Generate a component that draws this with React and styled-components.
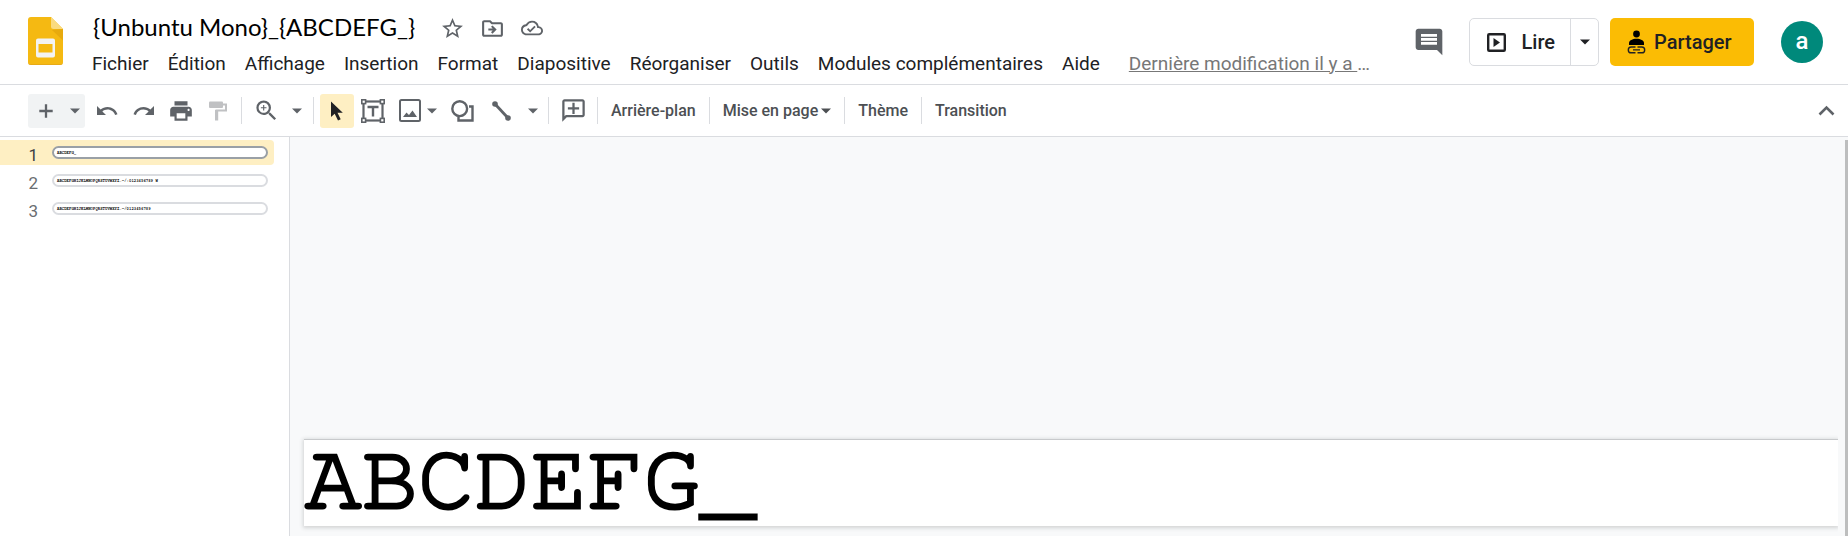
import React from 'react';
import styled, { createGlobalStyle } from 'styled-components';
import {
  MdComment,
  MdOutlineAddComment,
  MdOutlineCloudDone,
  MdOutlineDriveFileMove,
  MdPrint,
  MdRedo,
  MdStarBorder,
  MdUndo,
  MdZoomIn,
} from 'react-icons/md';

const GlobalStyle = createGlobalStyle`
  * { box-sizing: border-box; }
  body {
    margin: 0;
    background: #fff;
    color: #202124;
    font-family: Roboto, "Liberation Sans", sans-serif;
  }
  button, input { font: inherit; color: inherit; }
  svg { display: block; flex: none; }
`;

const Page = styled.div`
  min-height: 100vh;
  display: flex;
  flex-direction: column;
`;

/* ---------- header ---------- */

const Header = styled.header`
  height: 85px;
  display: flex;
  padding: 0 25px 0 28px;
  border-bottom: 1px solid #dadce0;
`;

const HomeLink = styled.a`
  padding-top: 17px;
  margin-right: 20px;
`;

const TitleColumn = styled.div`
  flex: 1;
  min-width: 0;
  padding-top: 10px;
`;

const TitleRow = styled.div`
  display: flex;
  align-items: center;
  height: 36px;
`;

const TitleInput = styled.input`
  width: 338px;
  height: 34px;
  margin-right: 11px;
  padding: 0 0 4px 10px;
  border: 0;
  outline: 0;
  background: none;
  color: #000;
  font-family: Lato, "Liberation Sans", sans-serif;
  font-size: 24px;
`;

const TitleButton = styled.button`
  width: 40px;
  height: 34px;
  display: flex;
  align-items: center;
  justify-content: center;
  padding: 0;
  border: 0;
  background: none;
  color: #5f6368;
`;

const MenuBar = styled.nav`
  display: flex;
  align-items: center;
  gap: 1px;
  height: 34px;
  white-space: nowrap;
`;

const MenuItem = styled.button`
  height: 30px;
  padding: 0 9px;
  border: 0;
  background: none;
  font-size: 19px;
`;

const HistoryLink = styled.a`
  margin-left: 19px;
  color: #777;
  font-size: 19px;
  text-decoration: none;

  span { text-decoration: underline; }
`;

const HeaderActions = styled.div`
  display: flex;
  align-items: center;
  height: 84px;
`;

const CommentsButton = styled.button`
  padding: 0;
  margin-right: 24px;
  border: 0;
  background: none;
  color: #5f6368;
`;

const SplitButton = styled.div`
  display: flex;
  height: 48px;
  margin-right: 11px;
  border: 1px solid #dadce0;
  border-radius: 5px;
`;

const PlayButton = styled.button`
  display: flex;
  align-items: center;
  gap: 16px;
  padding: 0 15px 0 17px;
  border: 0;
  background: none;
  font-size: 20px;
  font-weight: 500;
`;

const PlayMenuButton = styled.button`
  width: 28px;
  display: flex;
  align-items: center;
  justify-content: center;
  padding: 0;
  border: 0;
  border-left: 1px solid #dadce0;
  background: none;
`;

const ShareButton = styled.button`
  display: flex;
  align-items: center;
  gap: 8px;
  width: 144px;
  height: 48px;
  margin-right: 27px;
  padding: 0 0 0 17px;
  border: 0;
  border-radius: 5px;
  background: #fbbc04;
  font-size: 20px;
  font-weight: 500;
`;

const Avatar = styled.button`
  width: 42px;
  height: 42px;
  padding: 0 0 2px;
  border: 0;
  border-radius: 50%;
  background: #00897b;
  color: #fff;
  font-size: 24px;
  font-weight: 500;
  line-height: 38px;
`;

/* ---------- toolbar ---------- */

const Toolbar = styled.div`
  display: flex;
  align-items: center;
  height: 52px;
  padding: 0 3px 0 28px;
  border-bottom: 1px solid #dadce0;
`;

const Tool = styled.button`
  width: ${(p) => p.$width || 37}px;
  height: 34px;
  display: flex;
  align-items: center;
  justify-content: center;
  padding: 0;
  border: 0;
  border-radius: 3px;
  background: ${(p) => (p.$selected ? '#feefc3' : 'transparent')};
  color: ${(p) => (p.$selected ? '#202124' : p.$dimmed ? '#c0c1c3' : '#5f6368')};
`;

const NewSlide = styled.div`
  display: flex;
  margin-right: 3px;
  border-radius: 3px;
  background: #f1f3f4;
`;

const ImageTool = styled(Tool)`
  gap: 6px;
`;

const TextTool = styled.button`
  height: 34px;
  display: flex;
  align-items: center;
  gap: 3px;
  padding: 0 8px 0 7px;
  border: 0;
  background: none;
  color: #4c4f53;
  font-size: 16px;
  font-weight: 500;
  white-space: nowrap;
`;

const Separator = styled.span`
  width: 1px;
  height: 27px;
  margin: 0 6px 0 5px;
  background: #dadce0;
`;

const Spacer = styled.span`
  flex: 1;
`;

/* ---------- workspace ---------- */

const Workspace = styled.main`
  flex: 1;
  display: flex;
`;

const Filmstrip = styled.ol`
  width: 290px;
  flex: none;
  display: flex;
  flex-direction: column;
  gap: 3px;
  margin: 0;
  padding: 3px 15px 0 0;
  border-right: 1px solid #dadce0;
  list-style: none;
`;

const FilmstripRow = styled.li`
  display: flex;
  align-items: center;
  height: 25px;
  padding-right: 6px;
  border-radius: 0 4px 4px 0;
  background: ${(p) => (p.$selected ? '#feefc3' : 'transparent')};
`;

const SlideNumber = styled.span`
  width: 52px;
  padding: 4px 14px 0 0;
  color: ${(p) => (p.$selected ? '#3c4043' : '#6a6d71')};
  font-size: 17px;
  line-height: 20px;
  text-align: right;
`;

const Thumbnail = styled.button`
  flex: 1;
  height: 13px;
  padding: 0 3px;
  border: 2px solid ${(p) => (p.$selected ? '#9aa0a6' : '#dadce0')};
  border-radius: 7px;
  background: #fff;
  color: #000;
  font-family: FreeMono, "Liberation Mono", monospace;
  font-size: 4px;
  font-weight: 700;
  line-height: 8px;
  text-align: left;
  white-space: nowrap;
`;

const Canvas = styled.section`
  flex: 1;
  min-width: 0;
  display: flex;
  align-items: flex-end;
  padding: 0 7px 10px 14px;
  background: #f8f9fa;
`;

const Slide = styled.div`
  flex: 1;
  padding: 0 1px 5px;
  border-top: 1px solid #c8cacc;
  background: #fff;
  box-shadow: 0 1px 4px 1px rgba(60, 64, 67, 0.2);
  clip-path: inset(-8px 0 -8px -8px);
`;

const SlideText = styled.p`
  margin: 0;
  color: #000;
  font-family: FreeMono, "Liberation Mono", monospace;
  font-size: 94px;
  line-height: 81px;
  -webkit-text-stroke: 3px #000;
`;

const ScrollTrack = styled.div`
  width: 3px;
  padding-top: 3px;
  display: flex;
  background: #f8f9fa;
`;

const ScrollThumb = styled.div`
  flex: 1;
  background: #bdbebe;
`;

/* ---------- icons ---------- */

const Caret = () => (
  <svg width="10" height="6" viewBox="0 0 10 6">
    <path d="M0 0.500h10L5 5.500z" fill="currentColor" />
  </svg>
);

const SlidesLogo = () => (
  <svg width="35" height="48" viewBox="0 0 35 48">
    <path d="M3 0h20l12 12v33a3 3 0 0 1-3 3H3a3 3 0 0 1-3-3V3a3 3 0 0 1 3-3z" fill="#f5b912" />
    <path d="M0 44.500V45a3 3 0 0 0 3 3h29a3 3 0 0 0 3-3v-.5a3 3 0 0 1-3 3H3a3 3 0 0 1-3-3z" fill="#d99c1b" />
    <path d="M24 13l11 10.500V12z" fill="#dfa20b" opacity=".65" />
    <path d="M23 0l12 12H25.500A2.500 2.500 0 0 1 23 9.500z" fill="#fadb80" />
    <path
      d="M10 21.500h15a2 2 0 0 1 2 2v15a2 2 0 0 1-2 2H10a2 2 0 0 1-2-2v-15a2 2 0 0 1 2-2zM10.500 27v8.500h14V27z"
      fill="#f3f3f3"
      fillRule="evenodd"
    />
  </svg>
);

const PlayIcon = () => (
  <svg width="19" height="19" viewBox="0 0 19 19">
    <rect x="1.200" y="1.200" width="16.600" height="16.600" rx="1" fill="none" stroke="currentColor" strokeWidth="2.400" />
    <path d="M6.500 5v9l6.500-4.500z" fill="currentColor" />
  </svg>
);

const ShareIcon = () => (
  <svg width="19" height="24" viewBox="0 0 19 24">
    <circle cx="9.500" cy="4" r="3.400" fill="#000" />
    <path d="M2 15v-2c0-2.600 3.500-4.200 7.500-4.200S17 10.400 17 13v2z" fill="#000" />
    <path
      d="M8.500 17H4.200a2.900 2.900 0 0 0 0 5.800h4.300M10.500 17h4.300a2.900 2.900 0 0 1 0 5.800h-4.300M6 19.900h7"
      fill="none"
      stroke="#202124"
      strokeWidth="1.400"
    />
  </svg>
);

const PlusIcon = () => (
  <svg width="14" height="14" viewBox="0 0 14 14">
    <path d="M7 0.300v13.400M0.300 7h13.400" stroke="currentColor" strokeWidth="2.300" />
  </svg>
);

const PaintRollerIcon = () => (
  <svg width="18" height="20" viewBox="0 0 18 20">
    <rect x="0" y="0.500" width="14" height="6.500" rx="1" fill="currentColor" />
    <path d="M14 3.500h3v6H7.500V19" fill="none" stroke="currentColor" strokeWidth="2" />
    <rect x="6" y="9" width="3.200" height="10.500" fill="currentColor" />
  </svg>
);

const PointerIcon = () => (
  <svg width="12" height="20" viewBox="0 0 12 20">
    <path d="M0 0.500v15.500l3.700-3.300 3.300 6.800 2.700-1.300-3.200-6.500H11.800z" fill="currentColor" />
  </svg>
);

const TextBoxIcon = () => (
  <svg width="24" height="24" viewBox="0 0 24 24" fill="none" stroke="currentColor">
    <rect x="2.500" y="2.500" width="19" height="19" strokeWidth="2.200" />
    <path d="M6.500 8h11M12 8v9.500" strokeWidth="2.400" />
    <g fill="#fff" strokeWidth="1.600">
      <rect x="0.800" y="0.800" width="3.800" height="3.800" />
      <rect x="19.400" y="0.800" width="3.800" height="3.800" />
      <rect x="0.800" y="19.400" width="3.800" height="3.800" />
      <rect x="19.400" y="19.400" width="3.800" height="3.800" />
    </g>
  </svg>
);

const ImageIcon = () => (
  <svg width="22" height="23" viewBox="0 0 22 23">
    <rect x="1" y="1" width="20" height="21" rx="1.500" fill="none" stroke="currentColor" strokeWidth="2" />
    <path d="M4 18l3.500-4.500 2.500 2.500 3.500-4.500L18 18z" fill="currentColor" />
  </svg>
);

const ShapeIcon = () => (
  <svg width="23" height="22" viewBox="0 0 23 22" fill="none" stroke="currentColor" strokeWidth="2.400">
    <circle cx="8.700" cy="8.700" r="7.400" />
    <path d="M18 6.500h3.500V20.500H7.500V17" />
  </svg>
);

const LineIcon = () => (
  <svg width="19" height="20" viewBox="0 0 19 20" fill="currentColor">
    <path d="M3 3l13 14" stroke="currentColor" strokeWidth="2.800" />
    <circle cx="3" cy="3" r="2.800" />
    <circle cx="16" cy="17" r="2.800" />
  </svg>
);

const ChevronUpIcon = () => (
  <svg width="17" height="11" viewBox="0 0 17 11">
    <path d="M1.500 9.500l7-7 7 7" fill="none" stroke="currentColor" strokeWidth="2.600" />
  </svg>
);

const FlippedAddComment = styled(MdOutlineAddComment)`
  transform: scaleX(-1);
`;

/* ---------- data ---------- */

const MENUS = [
  'Fichier',
  'Édition',
  'Affichage',
  'Insertion',
  'Format',
  'Diapositive',
  'Réorganiser',
  'Outils',
  'Modules complémentaires',
  'Aide',
];

const SLIDES = [
  'ABCDEFG_',
  'ABCDEFGHIJKLMNOPQRSTUVWXYZ.-/:0123456789 W',
  'ABCDEFGHIJKLMNOPQRSTUVWXYZ.-/0123456789',
];

export default function App() {
  return (
    <Page>
      <GlobalStyle />
      <Header>
        <HomeLink href="#" aria-label="Accueil Slides">
          <SlidesLogo />
        </HomeLink>
        <TitleColumn>
          <TitleRow>
            <TitleInput aria-label="Titre" defaultValue="{Unbuntu Mono}_{ABCDEFG_}" />
            <TitleButton aria-label="Suivre"><MdStarBorder size={25} /></TitleButton>
            <TitleButton aria-label="Déplacer"><MdOutlineDriveFileMove size={25} /></TitleButton>
            <TitleButton aria-label="État du document"><MdOutlineCloudDone size={22} /></TitleButton>
          </TitleRow>
          <MenuBar>
            {MENUS.map((name) => (
              <MenuItem key={name}>{name}</MenuItem>
            ))}
            <HistoryLink href="#"><span>Dernière modification il y a </span>…</HistoryLink>
          </MenuBar>
        </TitleColumn>
        <HeaderActions>
          <CommentsButton aria-label="Commentaires"><MdComment size={32} /></CommentsButton>
          <SplitButton>
            <PlayButton><PlayIcon />Lire</PlayButton>
            <PlayMenuButton aria-label="Options de lecture"><Caret /></PlayMenuButton>
          </SplitButton>
          <ShareButton><ShareIcon />Partager</ShareButton>
          <Avatar>a</Avatar>
        </HeaderActions>
      </Header>

      <Toolbar role="toolbar">
        <NewSlide>
          <Tool aria-label="Nouvelle diapositive" $width={36}><PlusIcon /></Tool>
          <Tool aria-label="Choisir une mise en page" $width={21}><Caret /></Tool>
        </NewSlide>
        <Tool aria-label="Annuler"><MdUndo size={24} /></Tool>
        <Tool aria-label="Rétablir"><MdRedo size={24} /></Tool>
        <Tool aria-label="Imprimer"><MdPrint size={26} /></Tool>
        <Tool aria-label="Copier la mise en forme" $dimmed><PaintRollerIcon /></Tool>
        <Separator />
        <Tool aria-label="Zoom"><MdZoomIn size={27} /></Tool>
        <Tool aria-label="Niveau de zoom" $width={23}><Caret /></Tool>
        <Separator />
        <Tool aria-label="Sélectionner" $width={34} $selected><PointerIcon /></Tool>
        <Tool aria-label="Zone de texte" $width={38}><TextBoxIcon /></Tool>
        <ImageTool aria-label="Insérer une image" $width={52}><ImageIcon /><Caret /></ImageTool>
        <Tool aria-label="Forme"><ShapeIcon /></Tool>
        <Tool aria-label="Ligne" $width={41}><LineIcon /></Tool>
        <Tool aria-label="Choisir une ligne" $width={21}><Caret /></Tool>
        <Separator />
        <Tool aria-label="Ajouter un commentaire"><FlippedAddComment size={27} /></Tool>
        <Separator />
        <TextTool>Arrière-plan</TextTool>
        <Separator />
        <TextTool>Mise en page<Caret /></TextTool>
        <Separator />
        <TextTool>Thème</TextTool>
        <Separator />
        <TextTool>Transition</TextTool>
        <Spacer />
        <Tool aria-label="Masquer les menus"><ChevronUpIcon /></Tool>
      </Toolbar>

      <Workspace>
        <Filmstrip>
          {SLIDES.map((text, i) => (
            <FilmstripRow key={text} $selected={i === 0}>
              <SlideNumber $selected={i === 0}>{i + 1}</SlideNumber>
              <Thumbnail $selected={i === 0}>{text}</Thumbnail>
            </FilmstripRow>
          ))}
        </Filmstrip>
        <Canvas>
          <Slide>
            <SlideText>ABCDEFG_</SlideText>
          </Slide>
        </Canvas>
        <ScrollTrack>
          <ScrollThumb />
        </ScrollTrack>
      </Workspace>
    </Page>
  );
}
